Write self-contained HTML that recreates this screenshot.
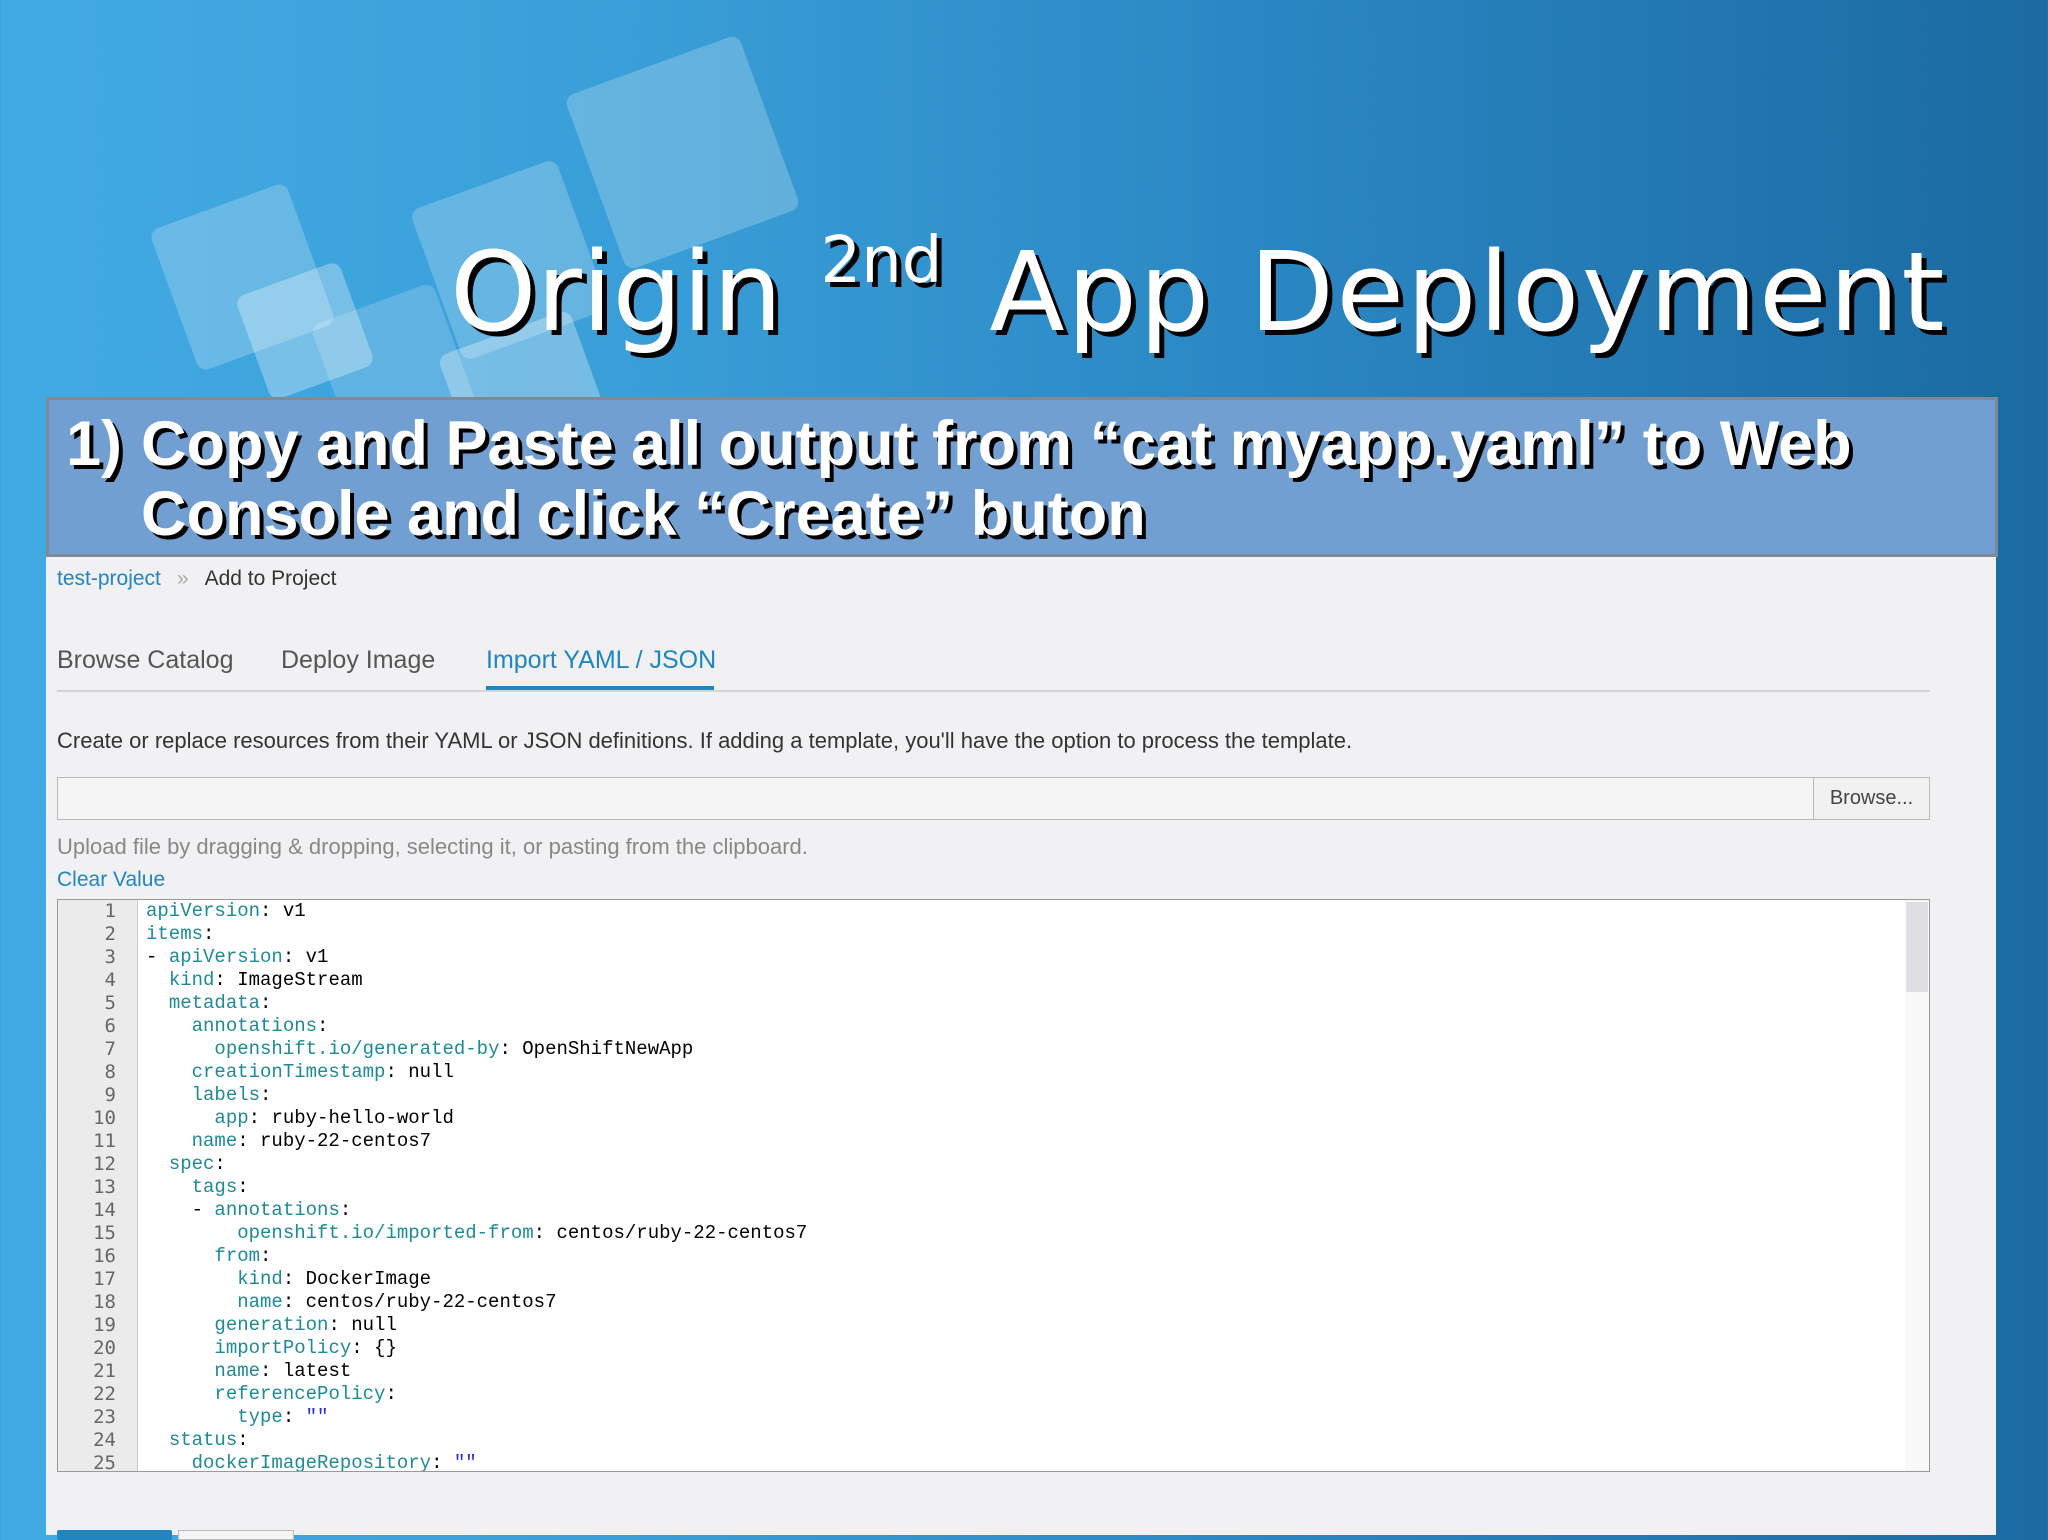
<!DOCTYPE html>
<html><head><meta charset="utf-8"><style>
*{margin:0;padding:0;box-sizing:border-box}
body{width:2048px;height:1535px;overflow:hidden;position:relative;background:linear-gradient(90deg,#42aae3 0%,#3a9fd8 30%,#2b88c4 60%,#1b6aa2 100%);font-family:"Liberation Sans",sans-serif}
.sq{position:absolute;border-radius:10px;background:rgba(255,255,255,.22);transform:rotate(-20deg)}
.title{position:absolute;left:450px;top:228px;font-size:110px;color:#fff;text-shadow:5px 5px 0 #000;white-space:nowrap;font-family:"DejaVu Sans","Liberation Sans",sans-serif}
.title sup{font-size:64px;position:relative;top:-4px;vertical-align:top;margin-left:38px;margin-right:12px}
.banner{position:absolute;left:46px;top:397px;width:1952px;height:160px;background:#729fd2;border:3px solid #7e8a96}
.banner div{position:absolute;color:#fff;font-weight:bold;font-size:63px;text-shadow:4px 4px 0 #000;white-space:nowrap;line-height:70px}
.panel{position:absolute;left:46px;top:557px;width:1950px;height:978px;background:#f1f1f3}
.ui{position:absolute;white-space:nowrap;font-family:"Liberation Sans",sans-serif;color:#363636}
.code{position:absolute;left:57px;top:899px;width:1873px;height:573px;background:#fff;border:1px solid #999;overflow:hidden}
.gut{position:absolute;left:0;top:0;width:80px;height:100%;background:#ebebeb;border-right:1px solid #ccc}
.ln{position:absolute;left:0;width:58px;text-align:right;font:19px/23px "DejaVu Sans Mono",monospace;color:#666}
.cl{position:absolute;left:88px;font:19px/23px "Liberation Mono",monospace;color:#000;white-space:pre}
.k{color:#1e8a96}.s{color:#2b2bd0}
</style></head><body>
<div class="sq" style="left:590px;top:60px;width:185px;height:185px"></div>
<div class="sq" style="left:432px;top:180px;width:155px;height:160px"></div>
<div class="sq" style="left:170px;top:202px;width:145px;height:150px"></div>
<div class="sq" style="left:250px;top:276px;width:110px;height:110px;background:rgba(255,255,255,.3)"></div>
<div class="sq" style="left:330px;top:300px;width:130px;height:140px;background:rgba(255,255,255,.18)"></div>
<div class="sq" style="left:450px;top:330px;width:140px;height:100px;background:rgba(255,255,255,.3)"></div>
<div class="title">Origin<sup>2nd</sup> <span style="letter-spacing:2.5px">App Deployment</span></div>
<div class="banner">
<div style="left:17px;top:9px">1)</div>
<div style="left:92px;top:9px">Copy and Paste all output from “cat myapp.yaml” to Web</div>
<div style="left:92px;top:79px">Console and click “Create” buton</div>
</div>
<div class="panel"></div>
<div class="ui" style="left:57px;top:567px;font-size:21px"><span style="color:#1f86c2">test-project</span><span style="color:#aaa;margin:0 16px">»</span><span style="color:#333">Add to Project</span></div>
<div class="ui" style="left:57px;top:646px;font-size:25px;color:#555">Browse Catalog</div>
<div class="ui" style="left:281px;top:646px;font-size:25px;color:#555">Deploy Image</div>
<div class="ui" style="left:486px;top:646px;font-size:25px;color:#1f86c2">Import YAML / JSON</div>
<div style="position:absolute;left:57px;top:690px;width:1873px;height:2px;background:#d4d4d4"></div>
<div style="position:absolute;left:486px;top:686px;width:228px;height:4px;background:#1f86c2"></div>
<div class="ui" style="left:57px;top:728px;font-size:22px;color:#333">Create or replace resources from their YAML or JSON definitions. If adding a template, you'll have the option to process the template.</div>
<div style="position:absolute;left:57px;top:777px;width:1873px;height:43px;background:#f5f5f6;border:1px solid #b9b9b9"></div>
<div class="ui" style="left:1813px;top:777px;width:117px;height:43px;border:1px solid #b9b9b9;background:#f1f1f1;font-size:20px;line-height:41px;text-align:center;color:#444">Browse...</div>
<div class="ui" style="left:57px;top:834px;font-size:22px;color:#888">Upload file by dragging &amp; dropping, selecting it, or pasting from the clipboard.</div>
<div class="ui" style="left:57px;top:868px;font-size:21px;color:#1f86c2">Clear Value</div>
<div class="code"><div class="gut"></div>
<div style="position:absolute;right:0;top:0;width:24px;height:100%;background:#f8f8f9"></div>
<div style="position:absolute;right:1px;top:2px;width:22px;height:90px;background:#dedee0"></div>
<div class="ln" style="top:0">1<br>2<br>3<br>4<br>5<br>6<br>7<br>8<br>9<br>10<br>11<br>12<br>13<br>14<br>15<br>16<br>17<br>18<br>19<br>20<br>21<br>22<br>23<br>24<br>25</div>
<div class="cl" style="top:0"><span class="k">apiVersion</span>: v1
<span class="k">items</span>:
- <span class="k">apiVersion</span>: v1
  <span class="k">kind</span>: ImageStream
  <span class="k">metadata</span>:
    <span class="k">annotations</span>:
      <span class="k">openshift.io/generated-by</span>: OpenShiftNewApp
    <span class="k">creationTimestamp</span>: null
    <span class="k">labels</span>:
      <span class="k">app</span>: ruby-hello-world
    <span class="k">name</span>: ruby-22-centos7
  <span class="k">spec</span>:
    <span class="k">tags</span>:
    - <span class="k">annotations</span>:
        <span class="k">openshift.io/imported-from</span>: centos/ruby-22-centos7
      <span class="k">from</span>:
        <span class="k">kind</span>: DockerImage
        <span class="k">name</span>: centos/ruby-22-centos7
      <span class="k">generation</span>: null
      <span class="k">importPolicy</span>: {}
      <span class="k">name</span>: latest
      <span class="k">referencePolicy</span>:
        <span class="k">type</span>: <span class="s">""</span>
  <span class="k">status</span>:
    <span class="k">dockerImageRepository</span>: <span class="s">""</span></div>
</div>
<div style="position:absolute;left:57px;top:1530px;width:115px;height:10px;background:#1f86c2;border-radius:2px"></div>
<div style="position:absolute;left:178px;top:1530px;width:116px;height:10px;background:#f5f5f5;border:1px solid #bbb"></div>
</body></html>
